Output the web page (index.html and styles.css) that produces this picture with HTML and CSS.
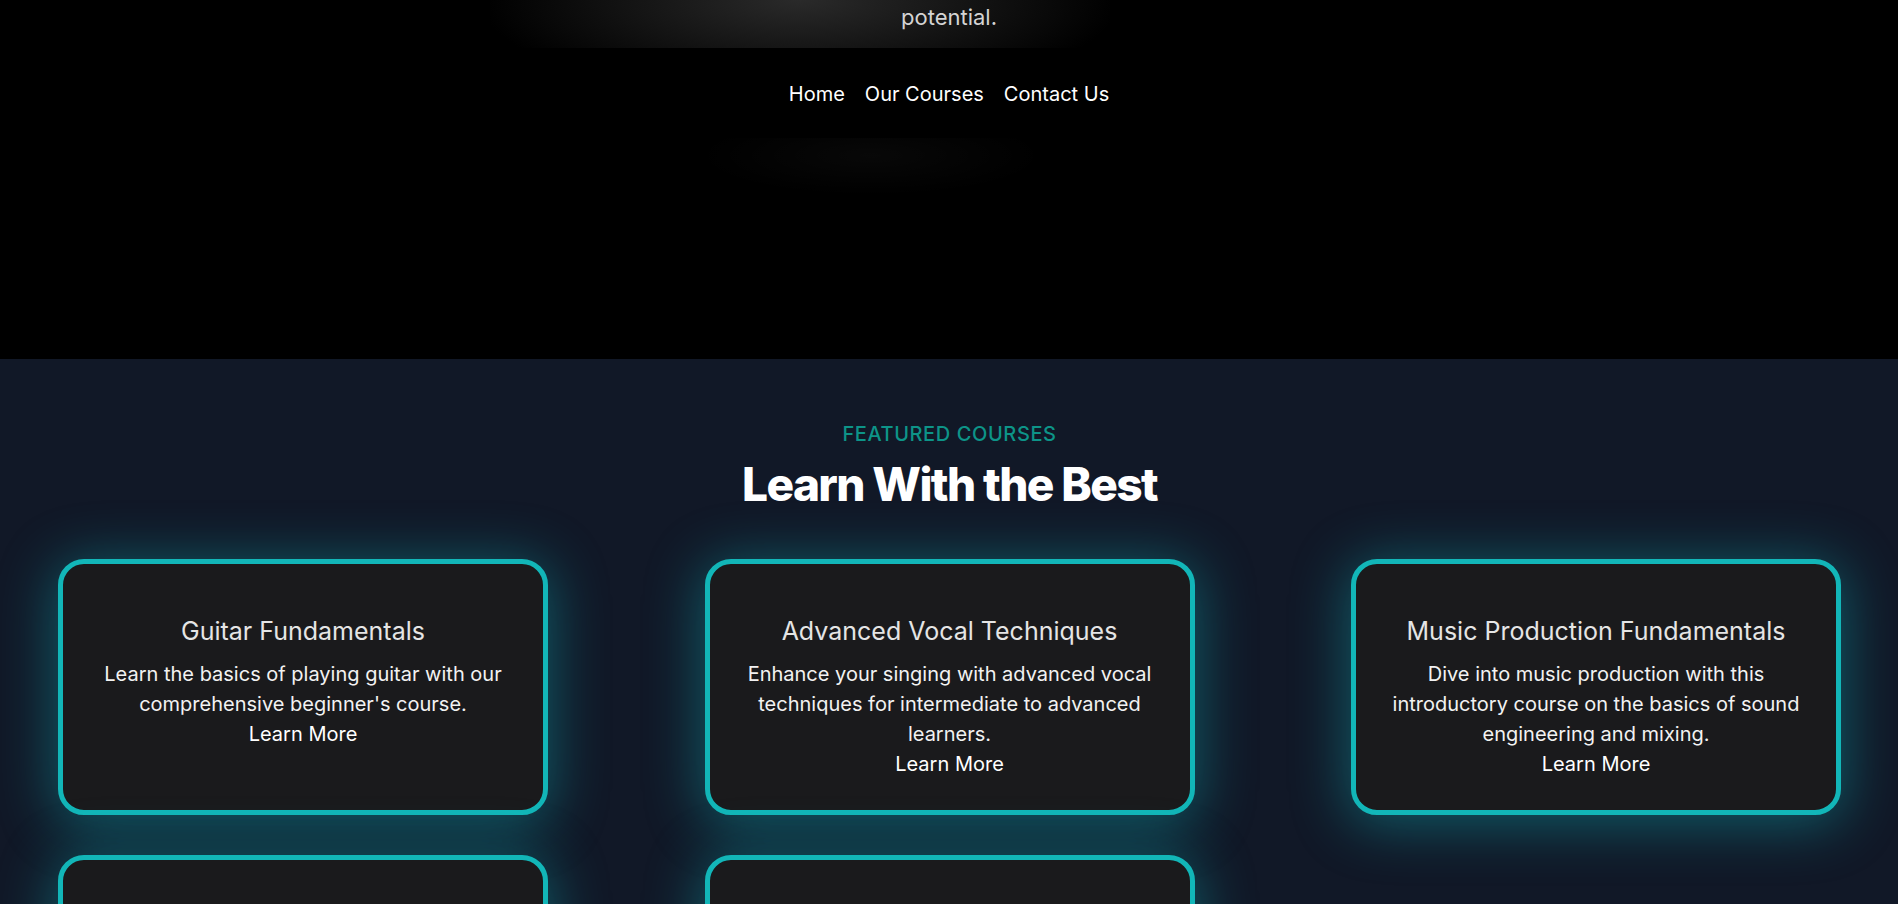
FILE: index.html
```html
<!DOCTYPE html>
<html lang="en">
<head>
<meta charset="utf-8">
<title>Music Courses</title>
<link rel="stylesheet" href="styles.css">
</head>
<body>
<header class="hero">
  <div class="hero-glow"></div>
  <p class="hero-text">potential.</p>
  <nav class="nav">
    <a href="#" class="nav-link">Home</a>
    <a href="#" class="nav-link">Our Courses</a>
    <a href="#" class="nav-link">Contact Us</a>
  </nav>
  <div class="hero-shade"></div>
</header>
<section class="courses">
  <p class="eyebrow">FEATURED COURSES</p>
  <h2 class="courses-title">Learn With the Best</h2>
  <div class="grid">
    <article class="card">
      <h3 class="card-title">Guitar Fundamentals</h3>
      <p class="card-text">Learn the basics of playing guitar with our comprehensive beginner's course.</p>
      <a href="#" class="card-link">Learn More</a>
    </article>
    <article class="card">
      <h3 class="card-title">Advanced Vocal Techniques</h3>
      <p class="card-text">Enhance your singing with advanced vocal techniques for intermediate to advanced learners.</p>
      <a href="#" class="card-link">Learn More</a>
    </article>
    <article class="card">
      <h3 class="card-title">Music Production Fundamentals</h3>
      <p class="card-text">Dive into music production with this introductory course on the basics of sound engineering and mixing.</p>
      <a href="#" class="card-link">Learn More</a>
    </article>
    <article class="card">
      <h3 class="card-title">Piano for Beginners</h3>
      <p class="card-text">Start your piano journey with our step-by-step course designed for complete beginners.</p>
      <a href="#" class="card-link">Learn More</a>
    </article>
    <article class="card">
      <h3 class="card-title">Drumming Essentials</h3>
      <p class="card-text">Master the essentials of drumming with rhythm, timing and groove exercises.</p>
      <a href="#" class="card-link">Learn More</a>
    </article>
  </div>
</section>
</body>
</html>
```
FILE: styles.css
```css
* { box-sizing: border-box; }
html, body { margin: 0; padding: 0; }
body {
  background: #000;
  font-family: Inter, "Noto Sans", sans-serif;
  color: #fff;
}
.hero {
  position: relative;
  height: 359px;
  background: #000;
  display: flex;
  flex-direction: column;
  align-items: center;
  overflow: hidden;
}
.hero-glow {
  position: absolute;
  top: 0;
  left: 490px;
  width: 620px;
  height: 48px;
  background: radial-gradient(ellipse 320px 100px at 50% 0%, #2a2a2a 0%, #171717 45%, #000 100%);
}
.hero-text {
  position: relative;
  margin: 2px 0 0;
  font-size: 22px;
  line-height: 30px;
  color: #d4d4d4;
}
.nav {
  position: relative;
  margin-top: 48px;
  display: flex;
  gap: 20px;
}
.nav-link {
  color: #fff;
  text-decoration: none;
  font-size: 20px;
  line-height: 28px;
}
.hero-shade {
  position: absolute;
  top: 138px;
  left: 696px;
  width: 350px;
  height: 58px;
  background: radial-gradient(ellipse at 50% 30%, rgba(255,255,255,0.03), rgba(255,255,255,0) 70%);
}
.courses {
  background: #111827;
  padding: 61px 57px 60px 58px;
  text-align: center;
}
.eyebrow {
  margin: 0;
  color: #0d9488;
  font-size: 20px;
  line-height: 28px;
  font-weight: 500;
  letter-spacing: 0.03em;
}
.courses-title {
  margin: 11px 0 0;
  font-size: 46px;
  line-height: 50px;
  font-weight: 800;
  letter-spacing: -0.035em;
  color: #fff;
}
.grid {
  margin-top: 50px;
  display: grid;
  grid-template-columns: repeat(3, 490px);
  justify-content: space-between;
  row-gap: 40px;
}
.card {
  background: #1a1a1c;
  border: 5px solid #12b6b8;
  border-radius: 26px;
  padding: 51px 32px 31px;
  box-shadow: 0 6px 55px 4px rgba(16, 170, 180, 0.45);
}
.card-title {
  margin: 0 0 12px;
  font-size: 25px;
  line-height: 32px;
  font-weight: 400;
  color: #e5e5e5;
}
.card-text {
  margin: 0;
  font-size: 20px;
  line-height: 30px;
  color: #f2f2f2;
}
.card-link {
  display: block;
  color: #fff;
  text-decoration: none;
  font-size: 20px;
  line-height: 30px;
}
```
